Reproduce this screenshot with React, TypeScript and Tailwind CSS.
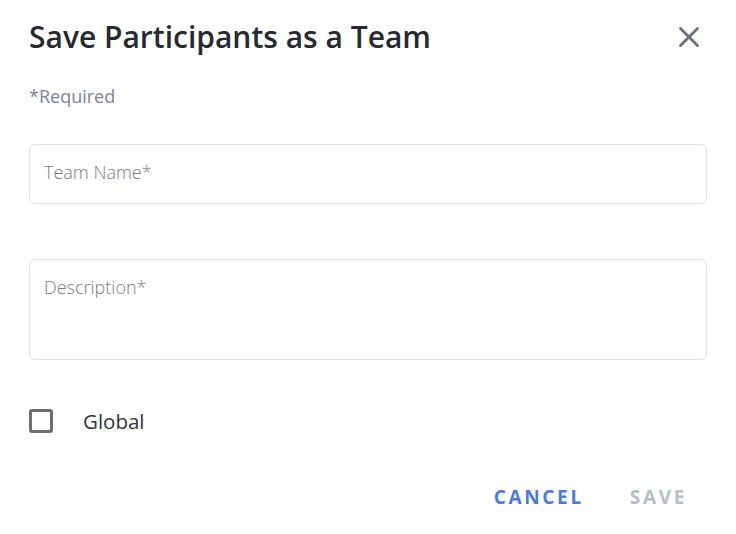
import { X } from "lucide-react";

export default function App() {
  return (
    <div className="w-[736px] h-[534px] bg-white font-['Open_Sans',sans-serif] px-[29px] pt-[17px]">
      <div className="flex items-center justify-between">
        <h1 className="text-[30px] font-semibold text-[#262a31] leading-[40px]">Save Participants as a Team</h1>
        <button className="text-[#6b7380] mr-[1px]">
          <X className="w-[34px] h-[34px]" strokeWidth={2} />
        </button>
      </div>
      <p className="mt-[27px] text-[18px] text-[#7a8394] leading-[24px]">*Required</p>

      <div className="mt-[36px] h-[60px] rounded-[6px] border border-[#dfe1e5] px-[14px] pb-[3px] flex items-center">
        <input
          className="w-full outline-none text-[18px] placeholder:text-[#7c7c7c] font-light"
          placeholder="Team Name*"
        />
      </div>

      <div className="mt-[55px] h-[101px] rounded-[6px] border border-[#dfe1e5] px-[14px] pt-[14px]">
        <textarea
          className="w-full outline-none resize-none text-[18px] placeholder:text-[#7c7c7c] font-light leading-[26px]"
          placeholder="Description*"
        />
      </div>

      <label className="mt-[46px] flex items-center">
        <span className="w-[24px] h-[24px] rounded-[3px] border-[3px] border-[#6e6e6e]" />
        <span className="ml-[30px] text-[20.5px] text-[#30343c]">Global</span>
      </label>

      <div className="mt-[46px] flex justify-end gap-[46px] pr-[20px]">
        <button className="text-[19px] font-bold tracking-[0.14em] text-[#4a7bdc]">CANCEL</button>
        <button className="text-[19px] font-bold tracking-[0.14em] text-[#b7bdca]">SAVE</button>
      </div>
    </div>
  );
}
